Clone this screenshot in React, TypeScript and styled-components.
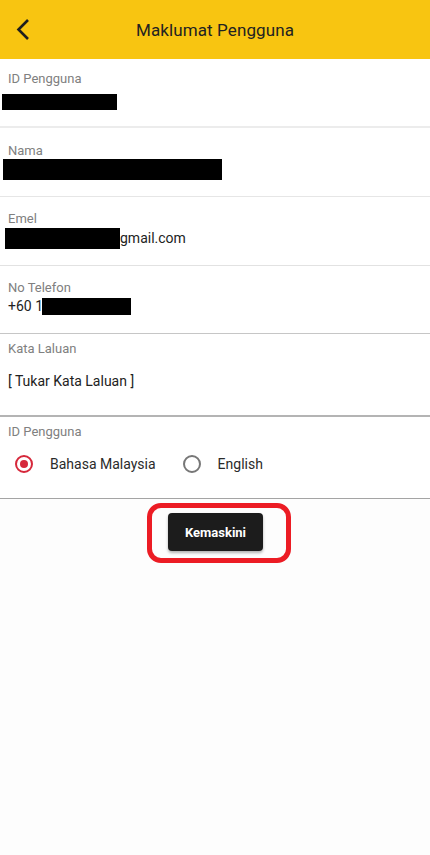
import { FC, ReactNode } from "react";
import styled, { createGlobalStyle } from "styled-components";

const GlobalStyle = createGlobalStyle`
  html, body {
    margin: 0;
    padding: 0;
    background: #fdfdfd;
  }
  body {
    font-family: Roboto, "Noto Sans", sans-serif;
    -webkit-font-smoothing: antialiased;
  }
`;

const Screen = styled.div`
  width: 430px;
  min-height: 855px;
  background: #fdfdfd;
  display: flex;
  flex-direction: column;
`;

const Header = styled.header`
  height: 59px;
  background: #f8c511;
  display: grid;
  grid-template-columns: 50px 1fr 50px;
  align-items: center;
`;

const BackButton = styled.button`
  width: 50px;
  height: 59px;
  padding: 0 0 0 16px;
  border: none;
  background: transparent;
  display: flex;
  align-items: center;
`;

const Title = styled.h1`
  margin: 0;
  text-align: center;
  font-size: 17px;
  font-weight: 400;
  color: #222;
  letter-spacing: 0.1px;
`;

const Row = styled.div<{ $pt: number; $h: number; $line: string; $lw?: number }>`
  height: ${(p) => p.$h}px;
  box-sizing: border-box;
  padding: ${(p) => p.$pt}px 8px 0;
  background: #fff;
  border-bottom: ${(p) => p.$lw ?? 1}px solid ${(p) => p.$line};
`;

const Label = styled.div`
  font-size: 13px;
  line-height: 16px;
  color: #808080;
`;

const Value = styled.div<{ $mt: number }>`
  margin-top: ${(p) => p.$mt}px;
  height: 22px;
  display: flex;
  align-items: center;
  font-size: 14px;
  color: #222;
`;

const Redact = styled.span<{ $w: number; $h: number; $shift?: number }>`
  display: inline-block;
  width: ${(p) => p.$w}px;
  height: ${(p) => p.$h}px;
  margin-left: ${(p) => p.$shift ?? 0}px;
  background: #000;
`;

const RadioGroup = styled.div`
  display: flex;
  align-items: center;
  padding-left: 7px;
`;

const RadioOption = styled.label`
  display: flex;
  align-items: center;
  gap: 17px;
  margin-right: 27px;
  font-size: 14px;
  color: #2a2a2a;
`;

const RadioCircle = styled.span<{ $on?: boolean }>`
  width: 18px;
  height: 18px;
  box-sizing: border-box;
  border-radius: 50%;
  border: 2px solid ${(p) => (p.$on ? "#d6283b" : "#777")};
  display: flex;
  align-items: center;
  justify-content: center;

  &::after {
    content: "";
    display: ${(p) => (p.$on ? "block" : "none")};
    width: 8px;
    height: 8px;
    border-radius: 50%;
    background: #d6283b;
  }
`;

const Actions = styled.div`
  display: flex;
  justify-content: center;
  padding-top: 4px;
`;

const Highlight = styled.div`
  margin-left: 8px;
  padding: 5px 23px 7px 16px;
  border: 5px solid #ec1c24;
  border-radius: 14px;
  display: flex;
`;

const SubmitButton = styled.button`
  width: 95px;
  height: 38px;
  border: none;
  border-radius: 4px;
  background: #1c1c1c;
  color: #fff;
  font-family: Roboto, sans-serif;
  font-size: 13px;
  font-weight: 700;
  box-shadow: 0 2px 3px rgba(0, 0, 0, 0.3);
`;

const BackIcon = () => (
  <svg width="16" height="24" viewBox="0 0 16 24">
    <path d="M12 2 L2.5 11.5 L12 21" fill="none" stroke="#1e1e1e" strokeWidth="2.6" />
  </svg>
);

interface FieldProps {
  label: string;
  pt: number;
  h: number;
  mt: number;
  line: string;
  lw?: number;
  children: ReactNode;
}

const Field: FC<FieldProps> = ({ label, pt, h, mt, line, lw, children }) => (
  <Row $pt={pt} $h={h} $line={line} $lw={lw}>
    <Label>{label}</Label>
    <Value $mt={mt}>{children}</Value>
  </Row>
);

export default function App() {
  return (
    <Screen>
      <GlobalStyle />
      <Header>
        <BackButton>
          <BackIcon />
        </BackButton>
        <Title>Maklumat Pengguna</Title>
        <span />
      </Header>

      <Field label="ID Pengguna" pt={12} h={69} mt={4} line="#ececec" lw={2}>
        <Redact $w={115} $h={16} $shift={-6} />
      </Field>
      <Field label="Nama" pt={15} h={69} mt={-1} line="#e6e6e6">
        <Redact $w={219} $h={21} $shift={-5} />
      </Field>
      <Field label="Emel" pt={14} h={69} mt={0} line="#e2e2e2">
        <Redact $w={115} $h={21} $shift={-3} />
        gmail.com
      </Field>
      <Field label="No Telefon" pt={14} h={68} mt={-1} line="#c6c6c6">
        +60 1
        <Redact $w={89} $h={17} $shift={-1} />
      </Field>
      <Field label="Kata Laluan" pt={7} h={83} mt={13} line="#b4b4b4" lw={2}>
        [ Tukar Kata Laluan ]
      </Field>
      <Field label="ID Pengguna" pt={7} h={82} mt={13} line="#a4a4a4">
        <RadioGroup>
          <RadioOption>
            <RadioCircle $on />
            Bahasa Malaysia
          </RadioOption>
          <RadioOption>
            <RadioCircle />
            English
          </RadioOption>
        </RadioGroup>
      </Field>

      <Actions>
        <Highlight>
          <SubmitButton>Kemaskini</SubmitButton>
        </Highlight>
      </Actions>
    </Screen>
  );
}
